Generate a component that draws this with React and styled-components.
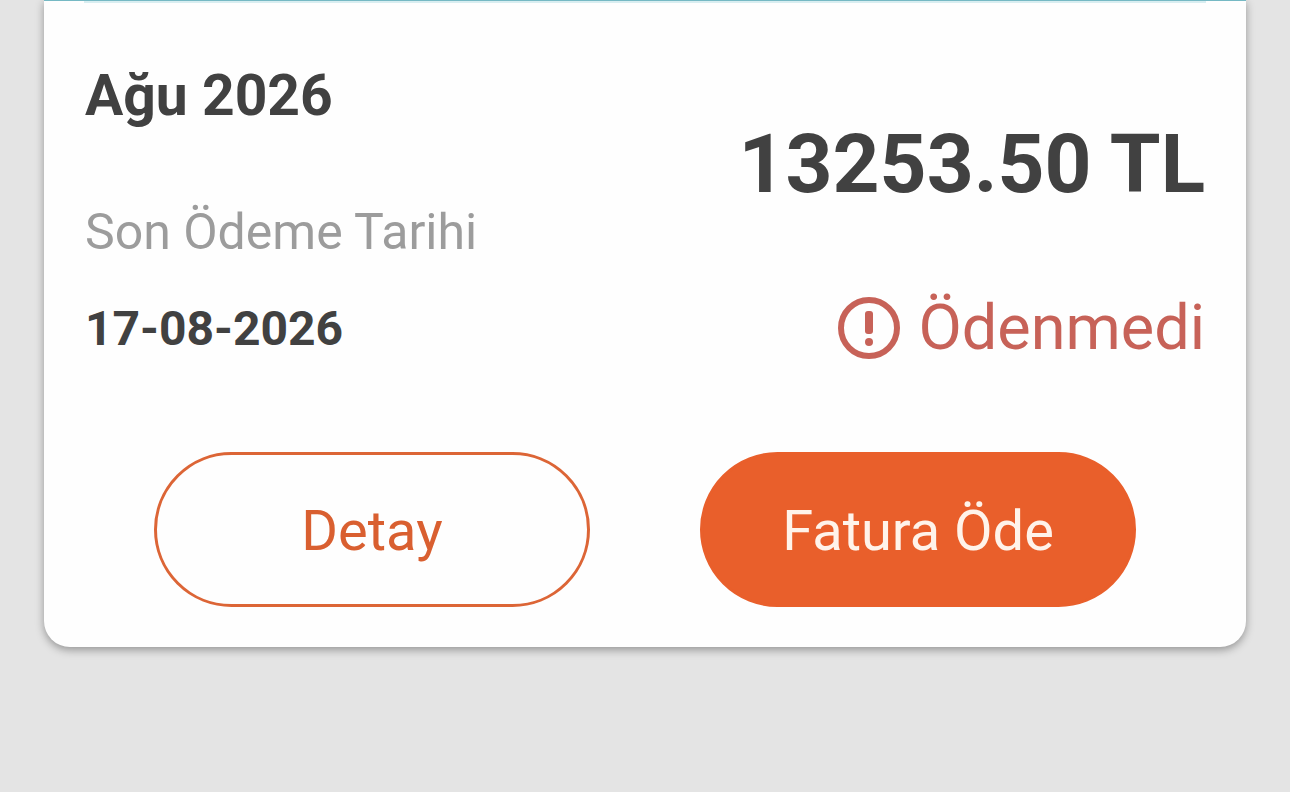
import styled, { createGlobalStyle } from "styled-components";

const GlobalStyle = createGlobalStyle`
  * {
    box-sizing: border-box;
  }
  body {
    margin: 0;
    background: #e4e4e4;
    font-family: Roboto, "Liberation Sans", sans-serif;
    color: #414141;
  }
`;

const Page = styled.main`
  min-height: 100vh;
  padding: 0 44px;
`;

const Card = styled.article`
  background: #fefefe;
  border-top: 1px solid #76b9c4;
  border-radius: 0 0 26px 26px;
  padding-bottom: 40px;
  box-shadow: 0 3px 8px rgba(0, 0, 0, 0.35);
`;

const Divider = styled.hr`
  height: 2px;
  margin: 0 40px;
  border: 0;
  background: #d9eef1;
`;

const Summary = styled.div`
  display: flex;
  justify-content: space-between;
  align-items: flex-start;
  padding: 59px 41px 0;
`;

const Column = styled.div`
  display: flex;
  flex-direction: column;
  align-items: ${({ $end }) => ($end ? "flex-end" : "flex-start")};
  padding-top: ${({ $end }) => ($end ? "54px" : "0")};
`;

const Period = styled.h2`
  margin: 0 0 74px;
  font-size: 57px;
  line-height: 68px;
  font-weight: 700;
`;

const DueLabel = styled.span`
  margin-bottom: 41px;
  font-size: 50px;
  line-height: 56px;
  color: #9c9c9c;
`;

const DueDate = styled.time`
  font-size: 48px;
  line-height: 56px;
  font-weight: 700;
`;

const Amount = styled.strong`
  margin-bottom: 80px;
  font-size: 82px;
  line-height: 96px;
  font-weight: 700;
`;

const Status = styled.span`
  display: flex;
  align-items: center;
  gap: 18px;
  font-size: 63px;
  line-height: 72px;
  color: #c76258;
`;

const Actions = styled.div`
  display: flex;
  gap: 110px;
  padding: 88px 110px 0;
`;

const Button = styled.button`
  flex: 1;
  height: 155px;
  padding: 2px 0 0;
  border: 3px solid ${({ $primary }) => ($primary ? "#e95f2b" : "#dc6536")};
  border-radius: 80px;
  background: ${({ $primary }) => ($primary ? "#e95f2b" : "transparent")};
  color: ${({ $primary }) => ($primary ? "#fff3ea" : "#d95f30")};
  font-family: inherit;
  font-size: 56px;
  line-height: 68px;
  cursor: pointer;
`;

const AlertIcon = () => (
  <svg width="62" height="62" viewBox="0 0 62 62" fill="none" stroke="currentColor" aria-hidden="true">
    <circle cx="31" cy="31" r="28" strokeWidth="6" />
    <rect x="27" y="14" width="8" height="23" rx="3" fill="currentColor" stroke="none" />
    <circle cx="31" cy="45" r="4" fill="currentColor" stroke="none" />
  </svg>
);

const App = () => {
  return (
    <>
      <GlobalStyle />
      <Page>
        <Card>
          <Divider />
          <Summary>
            <Column>
              <Period>Ağu 2026</Period>
              <DueLabel>Son Ödeme Tarihi</DueLabel>
              <DueDate dateTime="2026-08-17">17-08-2026</DueDate>
            </Column>
            <Column $end>
              <Amount>13253.50 TL</Amount>
              <Status>
                <AlertIcon />
                Ödenmedi
              </Status>
            </Column>
          </Summary>
          <Actions>
            <Button type="button">Detay</Button>
            <Button type="button" $primary>
              Fatura Öde
            </Button>
          </Actions>
        </Card>
      </Page>
    </>
  );
};

export default App;
